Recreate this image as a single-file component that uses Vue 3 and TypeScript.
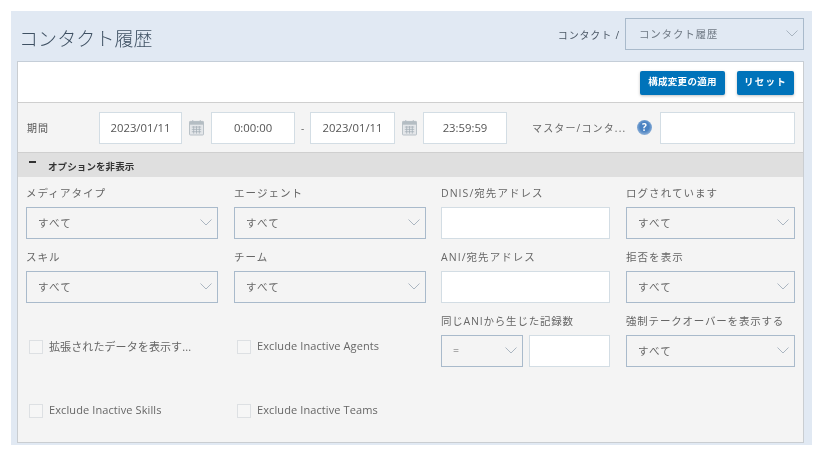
<script setup lang="ts">
interface Field {
  label: string
  kind: 'select' | 'input'
  value?: string
}

const rowOne: Field[] = [
  { label: 'メディアタイプ', kind: 'select', value: 'すべて' },
  { label: 'エージェント', kind: 'select', value: 'すべて' },
  { label: 'DNIS/宛先アドレス', kind: 'input' },
  { label: 'ログされています', kind: 'select', value: 'すべて' },
]
const rowTwo: Field[] = [
  { label: 'スキル', kind: 'select', value: 'すべて' },
  { label: 'チーム', kind: 'select', value: 'すべて' },
  { label: 'ANI/宛先アドレス', kind: 'input' },
  { label: '拒否を表示', kind: 'select', value: 'すべて' },
]
</script>

<template>
  <div class="page">
    <header class="head">
      <h1 class="title">コンタクト履歴</h1>
      <div class="crumbs">
        <span class="crumb-text">コンタクト /</span>
        <div class="select crumb-select">
          <span>コンタクト履歴</span>
          <svg class="chev" width="12" height="7" viewBox="0 0 12 7"><path d="M.5.5 6 6 11.5.5" /></svg>
        </div>
      </div>
    </header>

    <section class="panel">
      <div class="toolbar">
        <button class="btn wide" type="button">構成変更の適用</button>
        <button class="btn narrow" type="button">リセット</button>
      </div>

      <div class="dates">
        <span class="period">期間</span>
        <div class="input date first">2023/01/11</div>
        <svg class="cal cal-a" width="15" height="17" viewBox="0 0 16 17">
          <rect x=".5" y="2" width="15" height="14.5" rx="1" fill="#e4e7ea" stroke="#b4bdc3" />
          <rect x=".5" y="2" width="15" height="3.5" fill="#b4bdc3" />
          <path d="M4 .5v3M12 .5v3" stroke="#b4bdc3" />
          <path d="M3 8h10M3 10.5h10M3 13h10M5 7v8M8 7v8M11 7v8" stroke="#a3aeb5" stroke-width=".8" />
        </svg>
        <div class="input date">0:00:00</div>
        <span class="dash">-</span>
        <div class="input date end">2023/01/11</div>
        <svg class="cal" width="15" height="17" viewBox="0 0 16 17">
          <rect x=".5" y="2" width="15" height="14.5" rx="1" fill="#e4e7ea" stroke="#b4bdc3" />
          <rect x=".5" y="2" width="15" height="3.5" fill="#b4bdc3" />
          <path d="M4 .5v3M12 .5v3" stroke="#b4bdc3" />
          <path d="M3 8h10M3 10.5h10M3 13h10M5 7v8M8 7v8M11 7v8" stroke="#a3aeb5" stroke-width=".8" />
        </svg>
        <div class="input date">23:59:59</div>
        <span class="master">マスター/コンタ...</span>
        <span class="help">?</span>
        <div class="input master-input"></div>
      </div>

      <div class="bar">
        <span class="minus"></span>
        <span class="bar-text">オプションを非表示</span>
      </div>

      <div class="form">
        <div v-for="f in [...rowOne, ...rowTwo]" :key="f.label" class="field">
          <label class="label">{{ f.label }}</label>
          <div v-if="f.kind === 'select'" class="select">
            <span>{{ f.value }}</span>
            <svg class="chev" width="12" height="7" viewBox="0 0 12 7"><path d="M.5.5 6 6 11.5.5" /></svg>
          </div>
          <div v-else class="input"></div>
        </div>

        <div class="check-cell"><span class="box"></span><span class="check-text">拡張されたデータを表示す...</span></div>
        <div class="check-cell"><span class="box"></span><span class="check-text">Exclude Inactive Agents</span></div>
        <div class="field">
          <label class="label ani">同じANIから生じた記録数</label>
          <div class="pair">
            <div class="select op">
              <span>=</span>
              <svg class="chev" width="12" height="7" viewBox="0 0 12 7"><path d="M.5.5 6 6 11.5.5" /></svg>
            </div>
            <div class="input"></div>
          </div>
        </div>
        <div class="field">
          <label class="label takeover">強制テークオーバーを表示する</label>
          <div class="select">
            <span>すべて</span>
            <svg class="chev" width="12" height="7" viewBox="0 0 12 7"><path d="M.5.5 6 6 11.5.5" /></svg>
          </div>
        </div>

        <div class="check-cell"><span class="box"></span><span class="check-text">Exclude Inactive Skills</span></div>
        <div class="check-cell"><span class="box"></span><span class="check-text">Exclude Inactive Teams</span></div>
      </div>
    </section>
  </div>
</template>

<style scoped>
.page {
  box-sizing: border-box;
  width: 801px;
  height: 434px;
  margin: 11px 0 0 11px;
  padding: 7px 8px 0 6px;
  background: #e1e9f3;
  font-family: "Open Sans", "Noto Sans CJK JP", sans-serif;
  color: #555;
  overflow: hidden;
  filter: blur(0.35px);
}
.head {
  display: flex;
  justify-content: space-between;
  height: 43px;
}
.title {
  margin: 6px 0 0 2px;
  font-family: "Noto Sans CJK JP", sans-serif;
  font-size: 19px;
  font-weight: 300;
  letter-spacing: 0.1px;
  line-height: 28px;
  color: #3f5163;
}
.crumbs {
  display: flex;
  align-items: flex-start;
}
.crumb-text {
  margin: 10px 5px 0 0;
  font-size: 10px;
  line-height: 15px;
  letter-spacing: 0.85px;
  color: #4c5866;
}
.select {
  box-sizing: border-box;
  height: 32px;
  display: flex;
  align-items: center;
  justify-content: space-between;
  padding: 0 5px 2px 11px;
  border: 1px solid #a9bacb;
  font-size: 10.5px;
  letter-spacing: 1.2px;
  color: #666;
}
.crumb-select {
  width: 179px;
  padding-left: 13px;
  letter-spacing: 0.8px;
  color: #707a85;
}
.chev {
  flex: none;
  fill: none;
  stroke: #a3afbb;
  stroke-width: 0.9;
}
.panel {
  box-sizing: border-box;
  height: 382px;
  border: 1px solid #c9cdd1;
  border-top-color: #c5ced8;
  background: #f4f4f4;
}
.toolbar {
  height: 41px;
  box-sizing: border-box;
  display: flex;
  justify-content: flex-end;
  padding: 9px 9px 0 0;
  gap: 12px;
  background: #fff;
  border-bottom: 1px solid #cfcfcf;
}
.btn {
  height: 24px;
  border: 0;
  border-radius: 2px;
  padding: 1px 0 0;
  background: #0073ba;
  box-shadow: 0 1px 3px rgba(0, 0, 0, 0.25);
  color: #fff;
  font-family: "Noto Sans CJK JP", sans-serif;
  font-size: 9.5px;
  font-weight: 700;
  line-height: 19px;
  display: flex;
  justify-content: center;
  letter-spacing: 0.3px;
}
.wide { width: 85px; }
.narrow { width: 57px; letter-spacing: 1.3px; }
.dates {
  box-sizing: border-box;
  height: 50px;
  display: flex;
  align-items: center;
  padding: 0 8px 0 9px;
  border-bottom: 1px solid #cfcfcf;
}
.period {
  width: 72px;
  font-size: 10px;
  letter-spacing: 1px;
  color: #555;
}
.input {
  box-sizing: border-box;
  height: 32px;
  background: #fff;
  border: 1px solid #d3dde4;
}
.date {
  width: 84px;
  flex: none;
  display: flex;
  align-items: center;
  justify-content: center;
  font-size: 11.3px;
  color: #555;
}
.first { width: 83px; }
.end { width: 85px; }
.cal { margin: 0 6.5px; flex: none; }
.cal-a { margin: 0 7px; }
.dash {
  width: 15px;
  text-align: center;
  font-size: 10px;
  color: #666;
}
.master {
  margin-left: 25px;
  width: 105px;
  flex: none;
  font-size: 10px;
  letter-spacing: 1.15px;
  color: #666;
  white-space: nowrap;
}
.help {
  width: 15px;
  height: 15px;
  flex: none;
  border-radius: 50%;
  background: radial-gradient(circle at 50% 45%, #4a82c2 40%, #a6c1e0 85%);
  color: #fff;
  font-size: 10px;
  font-weight: 700;
  line-height: 15px;
  text-align: center;
}
.master-input {
  width: 135px;
  margin-left: 8px;
}
.bar {
  height: 24px;
  display: flex;
  align-items: center;
  padding-left: 11px;
  background: #dfdfdf;
}
.minus {
  width: 7px;
  height: 2px;
  margin-right: 12px;
  margin-top: -6px;
  background: #333;
}
.bar-text {
  padding-top: 2px;
  font-size: 9.5px;
  font-weight: 700;
  letter-spacing: 0.1px;
  color: #333;
}
.form {
  display: grid;
  grid-template-columns: 192px 192px 169px 169px;
  grid-auto-rows: 64px;
  column-gap: 16px;
  padding: 9px 0 0 8px;
}
.field {
  display: flex;
  flex-direction: column;
  min-width: 0;
}
.form > :nth-child(4n + 3),
.form > :nth-child(4n) {
  margin-left: -1px;
  width: 169px;
}
.label {
  height: 14px;
  margin-bottom: 7px;
  font-size: 10.5px;
  line-height: 14px;
  letter-spacing: 1.05px;
  color: #666;
  white-space: nowrap;
}
.ani { letter-spacing: 0.8px; }
.takeover { letter-spacing: 0.8px; }
.pair {
  display: flex;
  gap: 6px;
}
.op {
  width: 82px;
  flex: none;
}
.pair .input {
  flex: 1;
}
.check-cell {
  display: flex;
  align-items: center;
  align-self: start;
  height: 14px;
  margin-top: 26px;
  padding-left: 3px;
}
.box {
  width: 12px;
  height: 12px;
  flex: none;
  margin-right: 6px;
  border: 1px solid #dde0e3;
  background: #f6f6f6;
}
.check-text {
  margin-top: -3px;
  font-size: 11px;
  color: #666;
  letter-spacing: 0.1px;
  white-space: nowrap;
}
</style>
